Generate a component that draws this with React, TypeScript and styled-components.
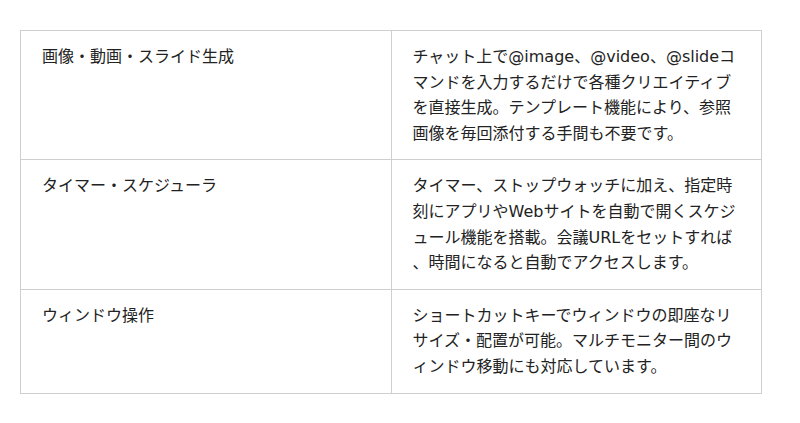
import styled, { createGlobalStyle } from "styled-components"

const GlobalStyle = createGlobalStyle`
  html, body {
    margin: 0;
    padding: 0;
    background: #ffffff;
  }
  body {
    font-family: "DejaVu Sans", "Noto Sans CJK JP", sans-serif;
    color: #222;
  }
`

const Page = styled.div`
  padding: 30px 39px 0 20px;
`

const Table = styled.table`
  width: 742px;
  border-collapse: collapse;
  table-layout: fixed;
  border: 1px solid #d6d6d6;
`

const Cell = styled.td`
  width: 50%;
  vertical-align: top;
  padding: 13px 21px;
  border: 1px solid #cfcfcf;
  font-size: 16px;
  line-height: 25.6px;
  line-break: anywhere;
  color: #222;
`

const rows = [
  {
    name: "画像・動画・スライド生成",
    desc: "チャット上で@image、@video、@slideコマンドを入力するだけで各種クリエイティブを直接生成。テンプレート機能により、参照画像を毎回添付する手間も不要です。",
  },
  {
    name: "タイマー・スケジューラ",
    desc: "タイマー、ストップウォッチに加え、指定時刻にアプリやWebサイトを自動で開くスケジュール機能を搭載。会議URLをセットすれば、時間になると自動でアクセスします。",
  },
  {
    name: "ウィンドウ操作",
    desc: "ショートカットキーでウィンドウの即座なリサイズ・配置が可能。マルチモニター間のウィンドウ移動にも対応しています。",
  },
]

export default function App() {
  return (
    <>
      <GlobalStyle />
      <Page>
        <Table>
          <tbody>
            {rows.map((row, index) => (
              <tr key={index}>
                <Cell>{row.name}</Cell>
                <Cell>{row.desc}</Cell>
              </tr>
            ))}
          </tbody>
        </Table>
      </Page>
    </>
  )
}
